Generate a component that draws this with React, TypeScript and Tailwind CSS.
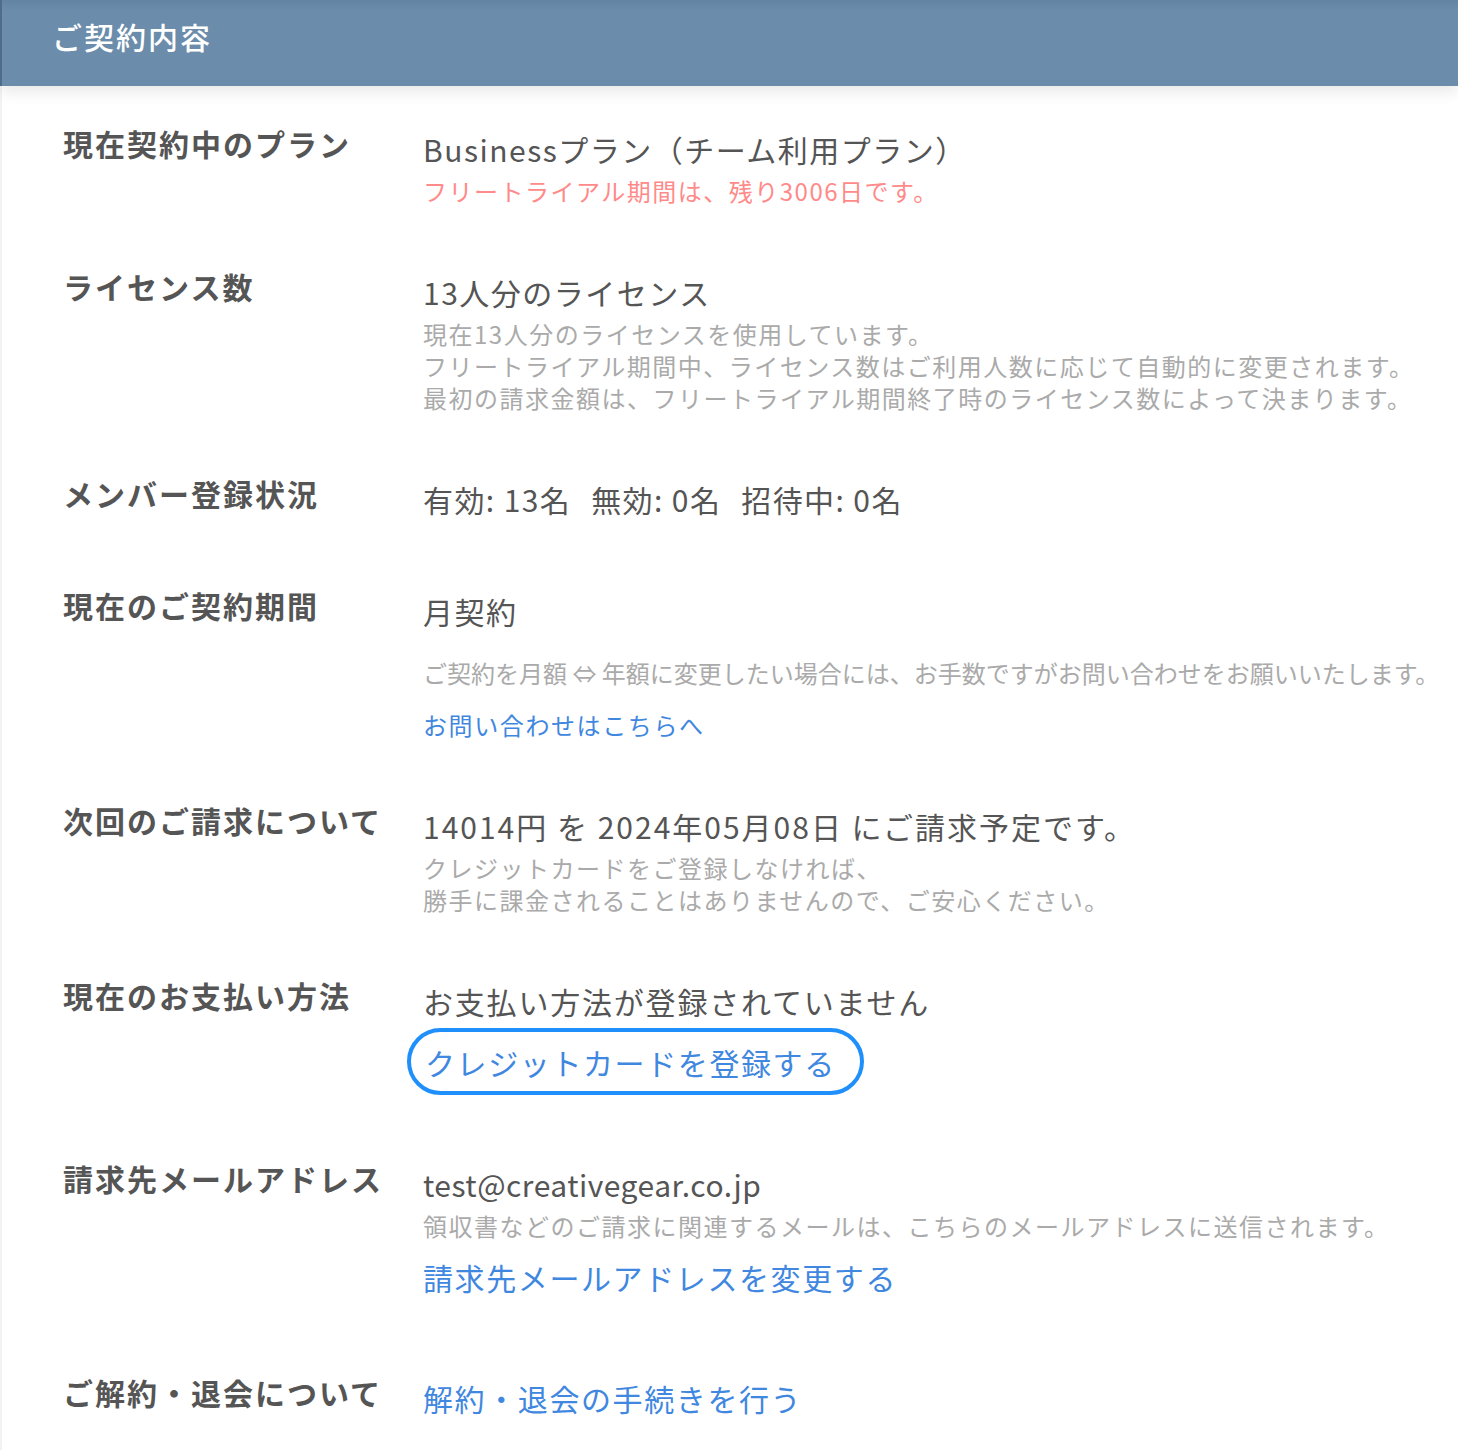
import React from "react"

const font = { fontFamily: '"Noto Sans CJK JP", "Noto Sans", sans-serif' }

function Row({ label, className, children }: { label: string; className?: string; children: React.ReactNode }) {
    return (
        <div className={"flex items-start " + (className || "")}>
            <div className="w-[360px] shrink-0 whitespace-nowrap text-[30px] font-bold leading-[28px] tracking-[2px] text-[#555]">{label}</div>
            <div className="min-w-0 flex-1">{children}</div>
        </div>
    )
}

// base sizes, colour added separately so classes don't fight
const main = "text-[30px] leading-[40px] whitespace-nowrap"
const sub = "text-[24px] leading-[32px] whitespace-nowrap"

export default function App() {
    return (
        <div className="min-h-[1450px] w-[1458px] bg-white" style={font}>
            <div className="relative z-10 flex h-[86px] items-center border-l-2 border-[#4f6d8b] bg-gradient-to-b from-[#6283a2] to-[#6b8cab] to-[12%] pb-[13px] pl-[50px] shadow-[0_6px_14px_rgba(0,0,0,0.09)]">
                <h1 className="text-[30px] font-medium tracking-[2px] text-white">ご契約内容</h1>
            </div>

            <div className="border-l-2 border-[#f2f2f2] pb-[40px] pl-[61px]">
                <Row label="現在契約中のプラン" className="pt-[43px]">
                    <p className={main + " tracking-[1.5px] text-[#555]"}>Businessプラン（チーム利用プラン）</p>
                    <p className={sub + " mt-[6px] tracking-[1.5px] text-[#ff8a8a]"}>フリートライアル期間は、残り3006日です。</p>
                </Row>

                <Row label="ライセンス数" className="mt-[65px]">
                    <p className={main + " tracking-[1.5px] text-[#555]"}>13人分のライセンス</p>
                    <div className="mt-[6px] tracking-[1.5px] text-[#aaa]">
                        <p className={sub}>現在13人分のライセンスを使用しています。</p>
                        <p className={sub}>フリートライアル期間中、ライセンス数はご利用人数に応じて自動的に変更されます。</p>
                        <p className={sub}>最初の請求金額は、フリートライアル期間終了時のライセンス数によって決まります。</p>
                    </div>
                </Row>

                <Row label="メンバー登録状況" className="mt-[65px]">
                    <p className={main + " tracking-[1.4px] text-[#555]"}>
                        有効: 13名<span className="ml-[20px]">無効: 0名</span><span className="ml-[20px]">招待中: 0名</span>
                    </p>
                </Row>

                <Row label="現在のご契約期間" className="mt-[72px]">
                    <p className={main + " tracking-[1.5px] text-[#555]"}>月契約</p>
                    <p className={sub + " mt-[26px] tracking-[0px] text-[#aaa]"}>ご契約を月額 ⇔ 年額に変更したい場合には、お手数ですがお問い合わせをお願いいたします。</p>
                    <p className={sub + " mt-[20px] tracking-[1.6px] text-[#3f87df]"}>お問い合わせはこちらへ</p>
                </Row>

                <Row label="次回のご請求について" className="mt-[65px]">
                    <p className={main + " tracking-[2px] text-[#555]"}>14014円 を 2024年05月08日 にご請求予定です。</p>
                    <div className="mt-[6px] tracking-[1.5px] text-[#aaa]">
                        <p className={sub}>クレジットカードをご登録しなければ、</p>
                        <p className={sub}>勝手に課金されることはありませんので、ご安心ください。</p>
                    </div>
                </Row>

                <Row label="現在のお支払い方法" className="mt-[65px]">
                    <p className={main + " tracking-[1.8px] text-[#555]"}>お支払い方法が登録されていません</p>
                    <button className="-ml-[16px] mt-[7px] flex h-[67px] items-center rounded-full border-[4px] border-[#1e8ffb] pl-[14px] pr-[24px]">
                        <span className={main + " tracking-[1.6px] text-[#3f87df]"}>クレジットカードを登録する</span>
                    </button>
                </Row>

                <Row label="請求先メールアドレス" className="mt-[69px]">
                    <p className={main + " tracking-[0.5px] text-[#555]"}>test@creativegear.co.jp</p>
                    <p className={sub + " mt-[6px] tracking-[1.5px] text-[#aaa]"}>領収書などのご請求に関連するメールは、こちらのメールアドレスに送信されます。</p>
                    <p className={main + " mt-[15px] tracking-[1.6px] text-[#3f87df]"}>請求先メールアドレスを変更する</p>
                </Row>

                <Row label="ご解約・退会について" className="mt-[81px]">
                    <p className={main + " tracking-[1.6px] text-[#3f87df]"}>解約・退会の手続きを行う</p>
                </Row>
            </div>
        </div>
    )
}
